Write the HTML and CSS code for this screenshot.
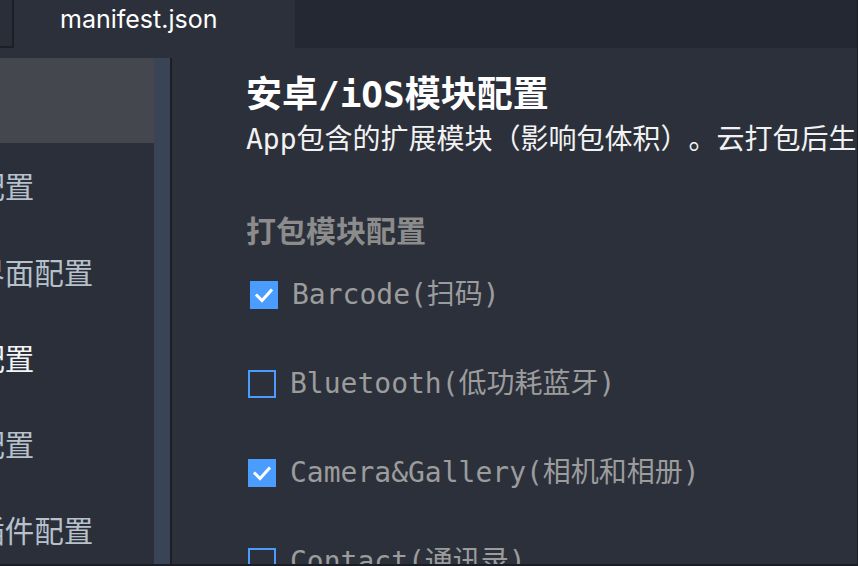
FILE: index.html
```html
<!DOCTYPE html>
<html lang="zh-CN">
<head>
<meta charset="utf-8">
<title>manifest.json</title>
<link rel="stylesheet" href="styles.css">
</head>
<body>
<div class="app">
  <div class="tabbar">
    <div class="tab tab-prev"></div>
    <div class="tab tab-active">manifest.json</div>
    <div class="tab-fill"></div>
  </div>
  <div class="main">
    <aside class="sidebar">
      <ul class="nav">
        <li class="nav-item is-selected"><span class="nav-text">基础配置</span></li>
        <li class="nav-item"><span class="nav-text">App图标配置</span></li>
        <li class="nav-item"><span class="nav-text">App启动界面配置</span></li>
        <li class="nav-item is-current"><span class="nav-text">App模块配置</span></li>
        <li class="nav-item"><span class="nav-text">App权限配置</span></li>
        <li class="nav-item"><span class="nav-text">App原生插件配置</span></li>
      </ul>
      <div class="scroll-track"></div>
    </aside>
    <section class="content">
      <h1 class="title">安卓/iOS模块配置</h1>
      <p class="desc">App包含的扩展模块（影响包体积）。云打包后生效</p>
      <h2 class="subtitle">打包模块配置</h2>
      <label class="option option-shift">
        <span class="box is-checked"><svg viewBox="0 0 28 28" width="28" height="28"><polyline points="7,14.5 12,19.5 21,9.5" fill="none" stroke="#ffffff" stroke-width="3" stroke-linecap="square"/></svg></span>
        <span class="option-text">Barcode(扫码)</span>
      </label>
      <label class="option">
        <span class="box"></span>
        <span class="option-text">Bluetooth(低功耗蓝牙)</span>
      </label>
      <label class="option">
        <span class="box is-checked"><svg viewBox="0 0 28 28" width="28" height="28"><polyline points="7,14.5 12,19.5 21,9.5" fill="none" stroke="#ffffff" stroke-width="3" stroke-linecap="square"/></svg></span>
        <span class="option-text">Camera&amp;Gallery(相机和相册)</span>
      </label>
      <label class="option">
        <span class="box"></span>
        <span class="option-text">Contact(通讯录)</span>
      </label>
    </section>
  </div>
</div>
</body>
</html>
```
FILE: styles.css
```css
* { box-sizing: border-box; }
html, body { margin: 0; padding: 0; }
body {
  width: 858px;
  height: 566px;
  overflow: hidden;
  background: #2b303b;
  font-family: "DejaVu Sans Mono", "Noto Sans CJK SC", monospace;
  text-spacing-trim: space-all;
}
.app {
  width: 858px;
  height: 566px;
  display: flex;
  flex-direction: column;
  overflow: hidden;
  border-bottom: 2px solid #1b1e25;
}
.tabbar {
  height: 48px;
  display: flex;
  flex: none;
  background: #242833;
}
.tab-prev {
  width: 14px;
  height: 48px;
  background: #2a2e39;
  border-right: 2px solid #1c1f26;
  border-bottom: 2px solid #1c1f26;
}
.tab-active {
  width: 281px;
  height: 48px;
  background: #2b303b;
  color: #ffffff;
  font-family: "Inter", "Noto Sans", sans-serif;
  font-size: 25px;
  line-height: 38px;
  padding-left: 46px;
}
.tab-fill {
  flex: 1;
  border-right: 1px solid #1b1e25;
}
.main {
  flex: 1;
  display: flex;
  min-height: 0;
  border-right: 1px solid #1b1e25;
}
.sidebar {
  width: 172px;
  flex: none;
  margin-top: 10px;
  display: flex;
  background: #2b2f3a;
  border-right: 2px solid #1b1e25;
}
.nav {
  list-style: none;
  margin: 0;
  padding: 0;
  width: 154px;
  overflow: hidden;
}
.nav-item {
  height: 86px;
  display: flex;
  align-items: center;
  white-space: nowrap;
  font-size: 29.5px;
  line-height: 36px;
  padding-top: 4px;
  color: #b6c1cc;
}
.nav-item.is-selected { background: #45474f; height: 85px; }
.nav-item.is-current { color: #f2f4f6; }
.nav-text { margin-left: -137px; }
.scroll-track {
  width: 16px;
  background: #394557;
}
.content {
  flex: 1;
  padding: 27px 0 0 74px;
  overflow: hidden;
  white-space: nowrap;
}
.title {
  margin: 0;
  font-size: 36px;
  line-height: 40px;
  font-weight: bold;
  color: #ffffff;
}
.desc {
  margin: 7px 0 0;
  font-size: 28px;
  line-height: 36px;
  color: #f2f2f2;
}
.subtitle {
  margin: 56px 0 0;
  font-size: 30px;
  line-height: 36px;
  font-weight: bold;
  color: #8c8c8c;
}
.option {
  display: flex;
  align-items: center;
  height: 36px;
  margin: 53px 0 0 2px;
  font-size: 28px;
  color: #9c9c9c;
}
.subtitle + .option { margin-top: 27px; }
.option-shift { margin-left: 4px; }
.box {
  width: 28px;
  height: 28px;
  flex: none;
  border: 2px solid #4a9dff;
  margin-right: 14px;
  display: flex;
}
.box.is-checked {
  background: #4a9dff;
  border: none;
}
.box svg { display: block; }
.option-text { line-height: 36px; }
```
